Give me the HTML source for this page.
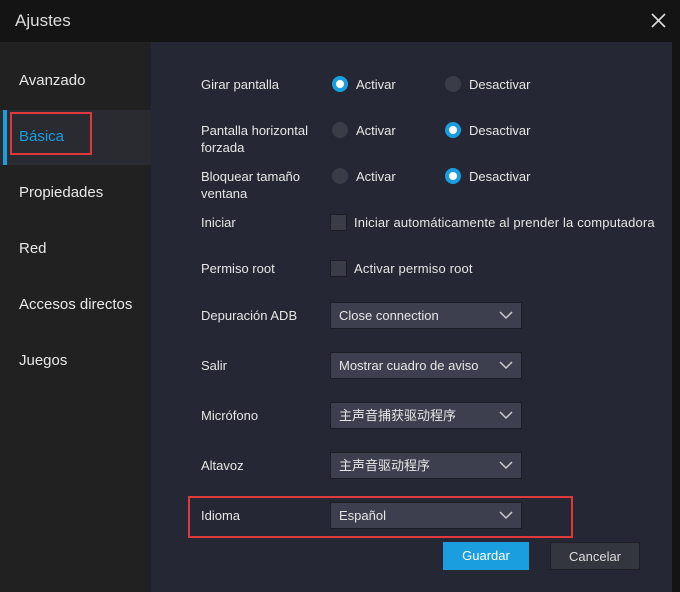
<!DOCTYPE html>
<html><head><meta charset="utf-8"><style>
*{margin:0;padding:0;box-sizing:border-box}
body{width:680px;height:592px;background:#141414;font-family:"Liberation Sans","Noto Sans CJK SC",sans-serif;color:#e6e6e6;position:relative;overflow:hidden;font-size:13px}
.a{position:absolute;white-space:nowrap}
.title{left:15px;top:11px;font-size:17px;color:#ddd}
.side{left:0;top:42px;width:151px;height:550px;background:#212121}
.content{left:151px;top:42px;width:521px;height:550px;background:#252734}
.si{left:19px;font-size:15px;color:#e8e8e8;top:0}
.lab{left:201px;font-size:13px;line-height:17px}
.r{width:16px;height:16px;border-radius:50%;background:#3a3c48}
.r.on{background:#fff;border:4px solid #1a9ee0}
.cb{width:17px;height:17px;background:#3a3c48;border:1px solid #1c1d24}
.dd{left:330px;width:192px;height:27px;background:#3d3f4f;border:1px solid #1c1d24;padding-left:8px;line-height:25px;font-size:13px}
.dd svg{position:absolute;right:8px;top:8px}
.btn{height:28px;line-height:28px;text-align:center;font-size:13px}
.t{letter-spacing:0.15px}
</style></head><body>
<div class="a title">Ajustes</div>
<svg class="a" style="left:651px;top:13px" width="15" height="15"><path d="M1 1L14 14M14 1L1 14" stroke="#ddd" stroke-width="1.6"/></svg>
<div class="a side"></div>
<div class="a" style="left:0;top:110px;width:151px;height:55px;background:#2a2b31"></div>
<div class="a" style="left:3px;top:110px;width:4px;height:55px;background:#1a9ee0"></div>
<div class="a" style="left:10px;top:112px;width:82px;height:43px;border:2px solid #e0393c"></div>
<div class="a si" style="top:72px">Avanzado</div>
<div class="a si" style="top:128px;color:#1a9ee0">Básica</div>
<div class="a si" style="top:184px">Propiedades</div>
<div class="a si" style="top:240px">Red</div>
<div class="a si" style="top:296px">Accesos directos</div>
<div class="a si" style="top:352px">Juegos</div>
<div class="a content"></div>

<div class="a lab" style="top:76px">Girar pantalla</div>
<div class="a lab" style="top:122px">Pantalla horizontal<br>forzada</div>
<div class="a lab" style="top:168px">Bloquear tamaño<br>ventana</div>
<div class="a lab" style="top:214px">Iniciar</div>
<div class="a lab" style="top:260px">Permiso root</div>
<div class="a lab" style="top:307px">Depuración ADB</div>
<div class="a lab" style="top:357px">Salir</div>
<div class="a lab" style="top:407px">Micrófono</div>
<div class="a lab" style="top:457px">Altavoz</div>
<div class="a lab" style="top:507px">Idioma</div>

<div class="a r on" style="left:332px;top:76px"></div><div class="a" style="left:356px;top:77px">Activar</div>
<div class="a r" style="left:445px;top:76px"></div><div class="a" style="left:469px;top:77px">Desactivar</div>
<div class="a r" style="left:332px;top:122px"></div><div class="a" style="left:356px;top:123px">Activar</div>
<div class="a r on" style="left:445px;top:122px"></div><div class="a" style="left:469px;top:123px">Desactivar</div>
<div class="a r" style="left:332px;top:168px"></div><div class="a" style="left:356px;top:169px">Activar</div>
<div class="a r on" style="left:445px;top:168px"></div><div class="a" style="left:469px;top:169px">Desactivar</div>
<div class="a cb" style="left:330px;top:214px"></div><div class="a t" style="left:354px;top:215px">Iniciar automáticamente al prender la computadora</div>
<div class="a cb" style="left:330px;top:260px"></div><div class="a t" style="left:354px;top:261px">Activar permiso root</div>

<div class="a dd" style="top:302px">Close connection<svg width="14" height="9"><path d="M1 1L7 7L13 1" stroke="#ccc" stroke-width="1.5" fill="none"/></svg></div>
<div class="a dd" style="top:352px">Mostrar cuadro de aviso<svg width="14" height="9"><path d="M1 1L7 7L13 1" stroke="#ccc" stroke-width="1.5" fill="none"/></svg></div>
<div class="a dd" style="top:402px">主声音捕获驱动程序<svg width="14" height="9"><path d="M1 1L7 7L13 1" stroke="#ccc" stroke-width="1.5" fill="none"/></svg></div>
<div class="a dd" style="top:452px">主声音驱动程序<svg width="14" height="9"><path d="M1 1L7 7L13 1" stroke="#ccc" stroke-width="1.5" fill="none"/></svg></div>
<div class="a dd" style="top:502px">Español<svg width="14" height="9"><path d="M1 1L7 7L13 1" stroke="#ccc" stroke-width="1.5" fill="none"/></svg></div>

<div class="a" style="left:188px;top:496px;width:385px;height:42px;border:2px solid #e0393c"></div>
<div class="a btn" style="left:443px;top:542px;width:86px;background:#1a9ee0;color:#fff">Guardar</div>
<div class="a btn" style="left:550px;top:542px;width:90px;background:#33353f;border:1px solid #1c1d24;color:#ddd">Cancelar</div>
</body></html>
